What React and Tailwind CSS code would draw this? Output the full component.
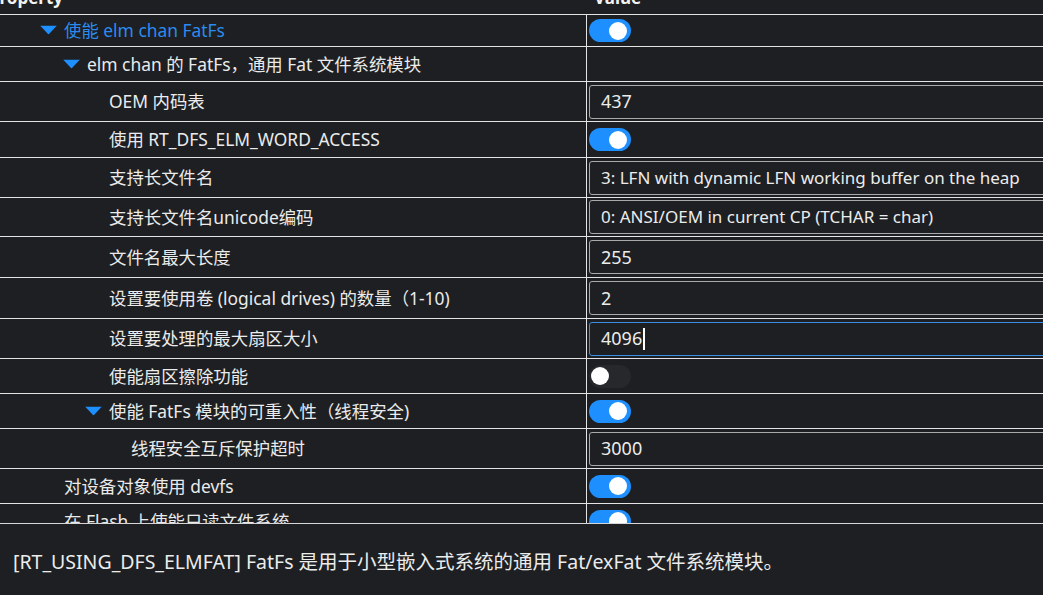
import React from "react";

/* ---------- Rows ---------- */
const rows = [
  { label: "使能 elm chan FatFs", level: 1, open: true, blue: true, kind: "toggle", on: true, h: "h-[32px]" },
  { label: "elm chan 的 FatFs，通用 Fat 文件系统模块", level: 2, open: true, kind: "none", h: "h-[35px]" },
  { label: "OEM 内码表", level: 3, kind: "input", value: "437", h: "h-[40px]" },
  { label: "使用 RT_DFS_ELM_WORD_ACCESS", level: 3, kind: "toggle", on: true, h: "h-[36px]" },
  { label: "支持长文件名", level: 3, kind: "select", value: "3: LFN with dynamic LFN working buffer on the heap", h: "h-[40px]" },
  { label: "支持长文件名unicode编码", level: 3, kind: "select", value: "0: ANSI/OEM in current CP (TCHAR = char)", h: "h-[39px]" },
  { label: "文件名最大长度", level: 3, kind: "input", value: "255", h: "h-[41px]" },
  { label: "设置要使用卷 (logical drives) 的数量（1-10)", level: 3, kind: "input", value: "2", h: "h-[41px]" },
  { label: "设置要处理的最大扇区大小", level: 3, kind: "input", value: "4096", focus: true, h: "h-[40px]" },
  { label: "使能扇区擦除功能", level: 3, kind: "toggle", on: false, h: "h-[35px]" },
  { label: "使能 FatFs 模块的可重入性（线程安全)", level: 3, open: true, kind: "toggle", on: true, h: "h-[35px]" },
  { label: "线程安全互斥保护超时", level: 4, kind: "input", value: "3000", h: "h-[40px]" },
  { label: "对设备对象使用 devfs", level: 1, kind: "toggle", on: true, h: "h-[35px]" },
  { label: "在 Flash 上使能只读文件系统", level: 1, kind: "toggle", on: true, h: "h-[35px]" },
];

const indent = {
  1: "pl-[64px]",
  2: "pl-[87px]",
  3: "pl-[109px]",
  4: "pl-[131px]",
};

function Caret() {
  return (
    <svg width="17" height="9" viewBox="0 0 17 9" className="absolute left-[-24px] top-1/2 -translate-y-1/2">
      <polygon points="0,0 17,0 8.5,9" fill="#1e8fff" />
    </svg>
  );
}

function Toggle({ on }) {
  return (
    <div
      className={
        on
          ? "w-[42px] h-[23px] rounded-full bg-[#1e8fff] flex items-center justify-end pr-[4px]"
          : "w-[42px] h-[23px] rounded-full bg-[#26282b] flex items-center justify-start pl-[2px]"
      }
    >
      <div className="w-[18px] h-[18px] rounded-full bg-white" />
    </div>
  );
}

function Value({ row }) {
  if (row.kind === "toggle") return <Toggle on={row.on} />;
  if (row.kind === "none") return null;

  const box = row.focus
    ? "border-[#3a8ee6]"
    : "border-[#a9a9a9]";

  return (
    <div
      className={`w-[500px] h-[34px] rounded-[3px] border ${box} flex items-center pl-[11px] text-[#ececec] ${
        row.kind === "select" ? "text-[17px]" : "text-[18px]"
      }`}
    >
      {row.value}
      {row.focus && <span className="w-[1.5px] h-[22px] bg-white ml-[1px]" />}
    </div>
  );
}

function Row({ row }) {
  return (
    <div className={`flex ${row.h} border-b border-[#e4e4e4]`}>
      <div className={`w-[587px] shrink-0 border-r border-[#e4e4e4] flex items-center ${indent[row.level]}`}>
        <span
          className={`relative text-[17.4px] whitespace-nowrap ${
            row.blue ? "text-[#2a8cf0]" : "text-[#ebebeb]"
          }`}
        >
          {row.open && <Caret />}
          {row.label}
        </span>
      </div>
      <div className="flex-1 flex items-center pl-[2px]">
        <Value row={row} />
      </div>
    </div>
  );
}

export default function App() {
  return (
    <div
      className="w-[1043px] h-[595px] bg-[#1d1f22] overflow-hidden flex flex-col"
      style={{ fontFamily: '"Noto Sans", "Noto Sans CJK SC", sans-serif' }}
    >
      {/* Property table, scrolled */}
      <div className="h-[523px] shrink-0 overflow-hidden">
        <div className="w-[1100px] -mt-[18px] -ml-[11px]">
          {/* Header */}
          <div className="flex h-[33px] border-b border-[#e4e4e4] font-bold text-[17px] text-[#f2f2f2]">
            <div className="w-[598px] shrink-0 flex items-center">Property</div>
            <div className="flex-1 flex items-center pl-[7px]">Value</div>
          </div>

          <div className="ml-[11px]">
            {rows.map((row, i) => (
              <Row key={i} row={row} />
            ))}
          </div>
        </div>
      </div>

      {/* Description */}
      <div className="flex-1 border-t border-[#d6d6d6] flex items-center pl-[13px] pt-[5px] text-[19.5px] text-[#ececec]">
        [RT_USING_DFS_ELMFAT] FatFs 是用于小型嵌入式系统的通用 Fat/exFat 文件系统模块。
      </div>
    </div>
  );
}
